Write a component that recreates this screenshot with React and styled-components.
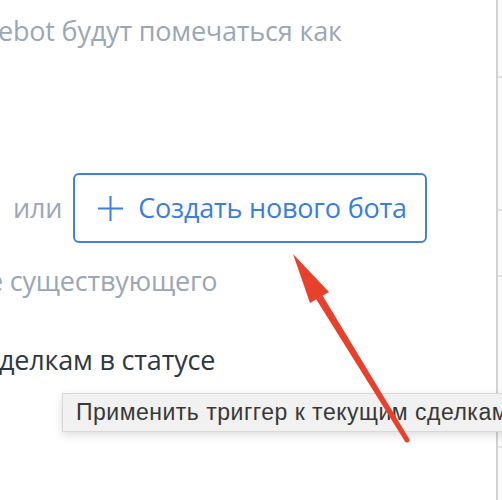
import React from "react";
import styled, { createGlobalStyle } from "styled-components";

const GlobalStyle = createGlobalStyle`
  html, body { margin: 0; padding: 0; background: #ffffff; overflow: hidden; }
  body { font-family: "Open Sans", "Noto Sans", sans-serif; }
  #root { width: 502px; height: 500px; }
`;

const Page = styled.div`
  position: relative;
  width: 502px;
  height: 500px;
  display: flex;
  overflow: hidden;
  background: #ffffff;
`;

const Main = styled.div`
  width: 498px;
  height: 500px;
  box-sizing: border-box;
  border-right: 2px solid #d2d2d2;
  display: flex;
  flex-direction: column;
  padding-top: 13px;
  overflow: hidden;
  white-space: nowrap;
  font-size: 27px;
  letter-spacing: -0.2px;
  line-height: 36px;
`;

const Gutter = styled.div`
  flex: 1;
  height: 500px;
  background-color: #fbfbfb;
  background-image:
    linear-gradient(#e2e2e2, #e2e2e2),
    linear-gradient(#e2e2e2, #e2e2e2),
    linear-gradient(#e6e6e6, #e6e6e6),
    linear-gradient(#e6e6e6, #e6e6e6);
  background-size: 100% 2px;
  background-repeat: no-repeat;
  background-position: 0 76px, 0 209px, 0 275px, 0 446px;
`;

const TextLine = styled.div`
  margin-left: ${(p) => p.$shift || 0}px;
  margin-top: ${(p) => p.$gap || 0}px;
  color: ${(p) => (p.$tone === "dark" ? "#2f3742" : "#9ba6b6")};
`;

const ActionRow = styled.div`
  display: flex;
  align-items: center;
  gap: 11px;
  margin-top: 124px;
  padding-left: 13px;
`;

const Or = styled.span`
  color: #9ba6b6;
`;

const CreateButton = styled.button`
  box-sizing: border-box;
  width: 354px;
  height: 70px;
  display: flex;
  align-items: center;
  gap: 15px;
  padding: 0 0 0 23px;
  background: #ffffff;
  border: 2px solid #3f80e0;
  border-radius: 6px;
  color: #3b7ddd;
  font-family: inherit;
  font-size: 27px;
  letter-spacing: -0.2px;
  line-height: 36px;
  cursor: pointer;
`;

const Plus = () => (
  <svg width="25" height="25" viewBox="0 0 25 25" aria-hidden="true">
    <path d="M12.5 0v25M0 12.5h25" stroke="#3b7ddd" strokeWidth="2" fill="none" />
  </svg>
);

const Tooltip = styled.div`
  position: absolute;
  left: 62px;
  top: 393px;
  width: 470px;
  height: 39px;
  box-sizing: border-box;
  padding-left: 13px;
  display: flex;
  align-items: center;
  background: #f1f1f1;
  border: 1px solid #d8d8d8;
  box-shadow: 0 3px 9px rgba(0, 0, 0, 0.14);
  color: #383838;
  font-family: "Liberation Sans", Arial, sans-serif;
  font-size: 23px;
  letter-spacing: 0.5px;
  white-space: nowrap;
`;

const Overlay = styled.svg`
  position: absolute;
  left: 0;
  top: 0;
  pointer-events: none;
`;

const Arrow = () => (
  <Overlay width="502" height="500" viewBox="0 0 502 500">
    <polygon points="293,254 310,303 329,292" fill="#e8412b" />
    <polygon points="316,299 322.5,295.5 409.1,438.7 404.9,441.3" fill="#e8412b" />
    <circle cx="407" cy="440" r="2.5" fill="#e8412b" />
  </Overlay>
);

export default function App() {
  return (
    <>
      <GlobalStyle />
      <Page>
        <Main>
          <TextLine $shift={-2}>ebot будут помечаться как</TextLine>
          <ActionRow>
            <Or>или</Or>
            <CreateButton type="button">
              <Plus />
              <span>Создать нового бота</span>
            </CreateButton>
          </ActionRow>
          <TextLine $shift={-12} $gap={20}>е существующего</TextLine>
          <TextLine $shift={-1} $gap={43} $tone="dark">делкам в статусе</TextLine>
        </Main>
        <Gutter />
        <Tooltip>Применить триггер к текущим сделкам</Tooltip>
        <Arrow />
      </Page>
    </>
  );
}
